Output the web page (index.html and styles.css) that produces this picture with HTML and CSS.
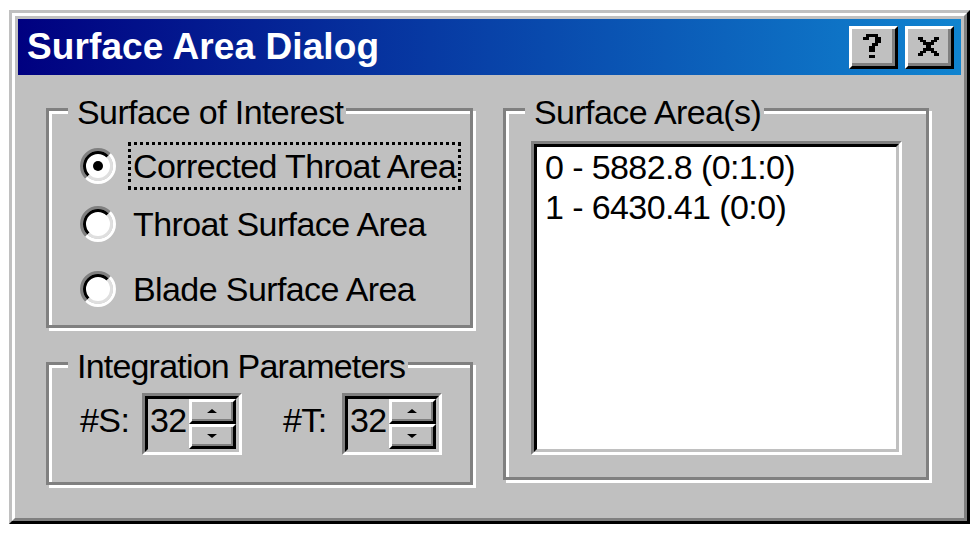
FILE: index.html
```html
<!DOCTYPE html>
<html>
<head>
<meta charset="utf-8">
<title>Surface Area Dialog</title>
<link rel="stylesheet" href="styles.css">
</head>
<body>
<div class="window">
  <div class="window-inner">
    <div class="titlebar">
      <span class="title">Surface Area Dialog</span>
      <div class="caption-buttons">
        <div class="cap-btn">
          <svg width="18" height="26" viewBox="0 0 6 8" shape-rendering="crispEdges">
            <rect x="1" y="0" width="4" height="1" fill="#000"/>
            <rect x="0" y="1" width="2" height="1" fill="#000"/>
            <rect x="4" y="1" width="2" height="1" fill="#000"/>
            <rect x="4" y="2" width="2" height="1" fill="#000"/>
            <rect x="3" y="3" width="2" height="1" fill="#000"/>
            <rect x="2" y="4" width="2" height="2" fill="#000"/>
            <rect x="2" y="7" width="2" height="1" fill="#000"/>
          </svg>
        </div>
        <div class="cap-btn">
          <svg width="23" height="19" viewBox="0 0 8 7" shape-rendering="crispEdges">
            <rect x="0" y="0" width="2" height="1" fill="#000"/>
            <rect x="6" y="0" width="2" height="1" fill="#000"/>
            <rect x="1" y="1" width="2" height="1" fill="#000"/>
            <rect x="5" y="1" width="2" height="1" fill="#000"/>
            <rect x="2" y="2" width="4" height="1" fill="#000"/>
            <rect x="3" y="3" width="2" height="1" fill="#000"/>
            <rect x="2" y="4" width="4" height="1" fill="#000"/>
            <rect x="1" y="5" width="2" height="1" fill="#000"/>
            <rect x="5" y="5" width="2" height="1" fill="#000"/>
            <rect x="0" y="6" width="2" height="1" fill="#000"/>
            <rect x="6" y="6" width="2" height="1" fill="#000"/>
          </svg>
        </div>
      </div>
    </div>
    <div class="body">
      <div class="left-col">
        <div class="group group-interest">
          <div class="legend">Surface of Interest</div>
          <div class="radios">
            <div class="radio-row">
              <svg class="radio" width="36" height="36" viewBox="0 0 36 36">
                <circle cx="18" cy="18" r="13" fill="#fff"/>
                <path d="M6.33 29.67 A16.5 16.5 0 0 1 29.67 6.33" stroke="#808080" stroke-width="3" fill="none"/>
                <path d="M29.67 6.33 A16.5 16.5 0 0 1 6.33 29.67" stroke="#fff" stroke-width="3" fill="none"/>
                <path d="M8.45 27.55 A13.5 13.5 0 0 1 27.55 8.45" stroke="#000" stroke-width="3" fill="none"/>
                <path d="M27.55 8.45 A13.5 13.5 0 0 1 8.45 27.55" stroke="#dfdfdf" stroke-width="3" fill="none"/>
                <circle cx="18" cy="18" r="5" fill="#000"/>
              </svg>
              <span class="radio-label focused">Corrected Throat Area</span>
            </div>
            <div class="radio-row">
              <svg class="radio" width="36" height="36" viewBox="0 0 36 36">
                <circle cx="18" cy="18" r="13" fill="#fff"/>
                <path d="M6.33 29.67 A16.5 16.5 0 0 1 29.67 6.33" stroke="#808080" stroke-width="3" fill="none"/>
                <path d="M29.67 6.33 A16.5 16.5 0 0 1 6.33 29.67" stroke="#fff" stroke-width="3" fill="none"/>
                <path d="M8.45 27.55 A13.5 13.5 0 0 1 27.55 8.45" stroke="#000" stroke-width="3" fill="none"/>
                <path d="M27.55 8.45 A13.5 13.5 0 0 1 8.45 27.55" stroke="#dfdfdf" stroke-width="3" fill="none"/>
              </svg>
              <span class="radio-label">Throat Surface Area</span>
            </div>
            <div class="radio-row">
              <svg class="radio" width="36" height="36" viewBox="0 0 36 36">
                <circle cx="18" cy="18" r="13" fill="#fff"/>
                <path d="M6.33 29.67 A16.5 16.5 0 0 1 29.67 6.33" stroke="#808080" stroke-width="3" fill="none"/>
                <path d="M29.67 6.33 A16.5 16.5 0 0 1 6.33 29.67" stroke="#fff" stroke-width="3" fill="none"/>
                <path d="M8.45 27.55 A13.5 13.5 0 0 1 27.55 8.45" stroke="#000" stroke-width="3" fill="none"/>
                <path d="M27.55 8.45 A13.5 13.5 0 0 1 8.45 27.55" stroke="#dfdfdf" stroke-width="3" fill="none"/>
              </svg>
              <span class="radio-label">Blade Surface Area</span>
            </div>
          </div>
        </div>
        <div class="group group-params">
          <div class="legend">Integration Parameters</div>
          <div class="spin-row">
            <div class="field">
              <span class="field-label">#S:</span>
              <div class="spin">
                <div class="spin-in">
                  <span class="spin-value">32</span>
                  <div class="spin-btns">
                    <div class="spin-btn"><span class="arrow-up"></span></div>
                    <div class="spin-btn"><span class="arrow-down"></span></div>
                  </div>
                </div>
              </div>
            </div>
            <div class="field field-t">
              <span class="field-label">#T:</span>
              <div class="spin">
                <div class="spin-in">
                  <span class="spin-value">32</span>
                  <div class="spin-btns">
                    <div class="spin-btn"><span class="arrow-up"></span></div>
                    <div class="spin-btn"><span class="arrow-down"></span></div>
                  </div>
                </div>
              </div>
            </div>
          </div>
        </div>
      </div>
      <div class="group group-areas">
        <div class="legend">Surface Area(s)</div>
        <div class="listbox">
          <div class="listbox-in">
            <div class="list-item">0 - 5882.8 (0:1:0)</div>
            <div class="list-item">1 - 6430.41 (0:0)</div>
          </div>
        </div>
      </div>
    </div>
  </div>
</div>
</body>
</html>
```
FILE: styles.css
```css
* { box-sizing: border-box; }

html, body {
  margin: 0;
  padding: 0;
  background: #fff;
}

body {
  font-family: "Liberation Sans", Arial, sans-serif;
  color: #000;
}

.window {
  margin: 10px 0 0 9px;
  width: 961px;
  height: 514px;
  border: 3px solid;
  border-color: #c0c0c0 #000 #000 #c0c0c0;
}

.window-inner {
  height: 100%;
  border: 3px solid;
  border-color: #fff #808080 #808080 #fff;
  background: #c0c0c0;
  padding: 3px;
  display: flex;
  flex-direction: column;
}

.titlebar {
  height: 56px;
  flex: none;
  background: linear-gradient(to right, #000080, #1084d0);
  display: flex;
  align-items: center;
  justify-content: space-between;
  padding: 0 7px 0 9px;
}

.title {
  color: #fff;
  font-weight: bold;
  font-size: 37px;
  line-height: 42px;
  letter-spacing: 0.1px;
  white-space: nowrap;
}

.caption-buttons {
  display: flex;
  gap: 7px;
  margin-top: 1px;
}

.cap-btn {
  width: 49px;
  height: 43px;
  background: #c0c0c0;
  border: 3px solid;
  border-color: #fff #000 #000 #fff;
  box-shadow: inset -3px -3px 0 #808080;
  display: flex;
  align-items: center;
  justify-content: center;
  padding: 0 3px 3px 0;
}

.cap-btn svg { display: block; }

.body {
  flex: 1;
  padding: 33px 0 0 28px;
  display: grid;
  grid-template-columns: 427px 426px;
  column-gap: 30px;
  align-items: start;
  font-size: 34px;
  letter-spacing: -0.6px;
}

.left-col {
  display: flex;
  flex-direction: column;
  gap: 34px;
}

.group {
  border: 3px solid #808080;
  box-shadow: inset 3px 3px 0 #fff, 3px 3px 0 #fff;
  display: flex;
  flex-direction: column;
}

.group-interest { height: 220px; }
.group-params { height: 123px; }
.group-areas { height: 372px; }

.legend {
  align-self: flex-start;
  margin: -17px 0 0 19px;
  padding: 0 3px 0 9px;
  background: #c0c0c0;
  line-height: 36px;
  height: 36px;
  white-space: nowrap;
}

.group-params .legend { letter-spacing: -0.8px; }

.radios {
  display: flex;
  flex-direction: column;
  margin-top: 12px;
  padding-left: 31px;
}

.radio-row {
  display: flex;
  align-items: center;
  height: 48px;
}

.radio-row + .radio-row { margin-top: 10px; }
.radio-row + .radio-row + .radio-row { margin-top: 17px; }

.radio {
  display: block;
  flex: none;
}

.radio-label {
  margin-left: 12px;
  height: 48px;
  line-height: 42px;
  padding: 0 2px;
  border: 3px dotted transparent;
  white-space: nowrap;
}

.radio-label.focused {
  border-color: #000;
}

.spin-row {
  display: flex;
  margin-top: 9px;
  padding-left: 31px;
}

.field {
  display: flex;
  align-items: center;
}

.field-t { margin-left: 38px; }

.field-label {
  width: 62px;
  padding: 0 0 8px 0;
  white-space: nowrap;
}

.field-t .field-label { padding-left: 3px; }

.spin {
  width: 100px;
  height: 62px;
  border: 3px solid;
  border-color: #808080 #fff #fff #808080;
}

.spin-in {
  height: 100%;
  border: 3px solid;
  border-color: #000 #c0c0c0 #c0c0c0 #000;
  background: #c0c0c0;
  display: flex;
}

.spin-value {
  flex: 1;
  padding-left: 2px;
  line-height: 42px;
}

.spin-btns {
  width: 47px;
  display: flex;
  flex-direction: column;
}

.spin-btn {
  height: 25px;
  background: #c0c0c0;
  border: 3px solid;
  border-color: #fff #000 #000 #fff;
  box-shadow: inset -2px -2px 0 #808080;
  display: flex;
  align-items: center;
  justify-content: center;
  padding: 0 2px 2px 0;
}

.arrow-up {
  width: 0;
  height: 0;
  border-left: 5px solid transparent;
  border-right: 5px solid transparent;
  border-bottom: 4px solid #000;
}

.arrow-down {
  width: 0;
  height: 0;
  border-left: 5px solid transparent;
  border-right: 5px solid transparent;
  border-top: 4px solid #000;
}

.listbox {
  margin: 11px 24px 0 25px;
  height: 314px;
  border: 3px solid;
  border-color: #808080 #fff #fff #808080;
}

.listbox-in {
  height: 100%;
  border: 3px solid;
  border-color: #000 #c0c0c0 #c0c0c0 #000;
  background: #fff;
  padding: 0 0 0 8px;
}

.list-item {
  line-height: 40px;
  height: 40px;
  white-space: nowrap;
}
```
